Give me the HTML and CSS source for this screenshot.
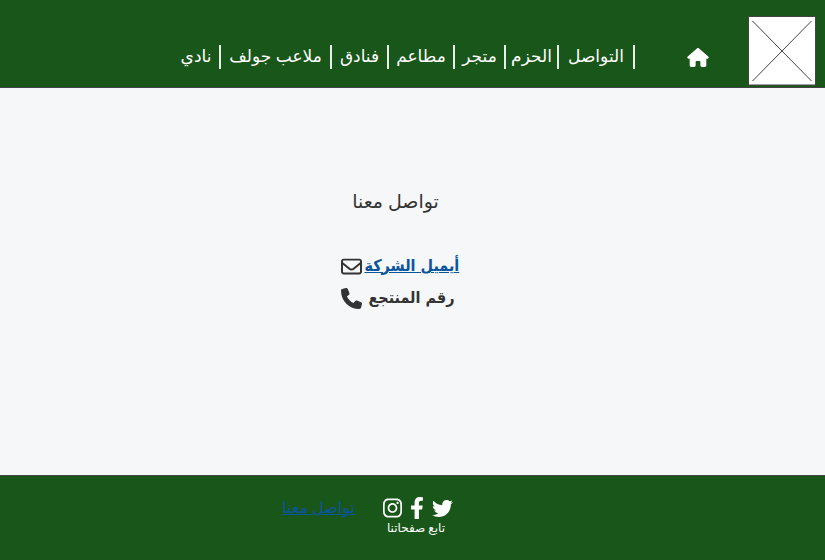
FILE: index.html
```html
<!DOCTYPE html>
<html lang="ar">
<head>
<meta charset="utf-8">
<meta name="viewport" content="width=device-width, initial-scale=1">
<title>تواصل معنا</title>
<link rel="stylesheet" href="styles.css">
</head>
<body>
<header class="site-header">
  <nav class="menu">
    <a class="menu-link w-32" href="#">نادي</a>
    <a class="menu-link w-95" href="#">ملاعب جولف</a>
    <a class="menu-link w-41" href="#">فنادق</a>
    <a class="menu-link w-50" href="#">مطاعم</a>
    <a class="menu-link w-35" href="#">متجر</a>
    <a class="menu-link w-37" href="#">الحزم</a>
    <a class="menu-link w-60" href="#">التواصل</a>
  </nav>
  <a class="home" href="#" aria-label="الرئيسية">
    <svg viewBox="0 0 576 512"><path d="M575.800 255.500c0 18-15 32.100-32 32.100h-32l.7 160.200c0 2.700-.2 5.400-.5 8.100V472c0 22.100-17.900 40-40 40H392c-22.100 0-40-17.900-40-40v-88c0-17.700-14.300-32-32-32h-64c-17.700 0-32 14.300-32 32v88c0 22.100-17.900 40-40 40h-80c-22.100 0-40-17.900-40-40V287.600H32c-18 0-32-14-32-32.100 0-9 3-17 10-24L266.400 8c7-7 15-8 22-8s15 2 21 7l255.400 224.500c8 7 12 15 11 24z"/></svg>
  </a>
  <svg class="logo" viewBox="0 0 68 70"><rect x="0.500" y="0.500" width="67" height="68.500"/><path d="M4.500 5L63.500 65M63.500 5L4.500 65"/></svg>
</header>
<main class="content">
  <h1 class="title" dir="rtl">تواصل معنا</h1>
  <div class="contact-row">
    <svg class="icon" viewBox="0 0 512 512"><path d="M64 112c-8.800 0-16 7.200-16 16v22.100l172.500 141.600c20.700 17 50.400 17 71.100 0L464 150.100V128c0-8.800-7.200-16-16-16H64zM48 212.200V384c0 8.800 7.200 16 16 16h384c8.800 0 16-7.200 16-16V212.200L322 328.800c-38.400 31.500-93.700 31.500-132 0L48 212.200zM0 128c0-35.300 28.700-64 64-64h384c35.300 0 64 28.700 64 64v256c0 35.300-28.700 64-64 64H64c-35.300 0-64-28.700-64-64V128z"/></svg>
    <a class="email" href="#" dir="rtl">أيميل الشركة</a>
  </div>
  <div class="contact-row">
    <svg class="icon" viewBox="0 0 512 512"><path d="M164.900 24.600c-7.700-18.600-28-28.500-47.400-23.200l-88 24C12.100 30.200 0 46 0 64c0 247.400 200.600 448 448 448 18 0 33.800-12.100 38.600-29.500l24-88c5.300-19.400-4.600-39.700-23.200-47.400l-96-40c-16.300-6.800-35.200-2.100-46.300 11.600L304.700 368C234.300 334.700 177.300 277.700 144 207.300l49.300-40.300c13.700-11.200 18.400-30 11.600-46.300l-40-96z"/></svg>
    <span class="phone" dir="rtl">رقم المنتجع</span>
  </div>
</main>
<footer class="site-footer">
  <a class="footer-link" href="#" dir="rtl">تواصل معنا</a>
  <div class="follow">
    <div class="social">
      <a href="#" aria-label="Instagram"><svg class="instagram" viewBox="0 0 448 512"><path d="M224.100 141c-63.600 0-114.900 51.300-114.900 114.900s51.300 114.900 114.900 114.900S339 319.500 339 255.900 287.700 141 224.100 141zm0 189.600c-41.100 0-74.700-33.500-74.700-74.700s33.500-74.700 74.700-74.700 74.700 33.500 74.700 74.700-33.600 74.700-74.700 74.700zm146.400-194.300c0 14.900-12 26.800-26.800 26.800-14.900 0-26.800-12-26.800-26.800s12-26.800 26.800-26.800 26.800 12 26.800 26.800zm76.100 27.200c-1.700-35.900-9.900-67.700-36.200-93.900-26.200-26.200-58-34.400-93.900-36.200-37-2.100-147.900-2.100-184.900 0-35.800 1.700-67.600 9.900-93.900 36.100s-34.400 58-36.200 93.900c-2.100 37-2.100 147.900 0 184.900 1.700 35.900 9.900 67.700 36.200 93.900s58 34.400 93.900 36.200c37 2.100 147.900 2.100 184.900 0 35.900-1.700 67.700-9.900 93.900-36.200 26.200-26.200 34.400-58 36.200-93.900 2.100-37 2.100-147.800 0-184.800zM398.800 388c-7.800 19.600-22.900 34.700-42.600 42.600-29.500 11.700-99.500 9-132.100 9s-102.700 2.600-132.100-9c-19.600-7.800-34.700-22.900-42.600-42.600-11.700-29.500-9-99.500-9-132.100s-2.600-102.700 9-132.100c7.800-19.600 22.900-34.700 42.600-42.600 29.500-11.700 99.500-9 132.100-9s102.700-2.600 132.100 9c19.600 7.800 34.700 22.900 42.600 42.600 11.700 29.500 9 99.500 9 132.100s2.700 102.700-9 132.100z"/></svg></a>
      <a href="#" aria-label="Facebook"><svg class="facebook" viewBox="0 0 320 512"><path d="M279.140 288l14.220-92.660h-88.910v-60.130c0-25.350 12.420-50.060 52.240-50.060h40.420V6.260S260.430 0 225.360 0c-73.220 0-121.080 44.380-121.080 124.720v70.620H22.890V288h81.390v224h100.170V288z"/></svg></a>
      <a href="#" aria-label="Twitter"><svg class="twitter" viewBox="0 0 512 512"><path d="M459.370 151.716c.325 4.548.325 9.097.325 13.645 0 138.720-105.583 298.558-298.558 298.558-59.452 0-114.680-17.219-161.137-47.106 8.447.974 16.568 1.299 25.340 1.299 49.055 0 94.213-16.568 130.274-44.832-46.132-.975-84.792-31.188-98.112-72.772 6.498.974 12.995 1.624 19.818 1.624 9.421 0 18.843-1.300 27.614-3.573-48.081-9.747-84.143-51.980-84.143-102.985v-1.299c13.969 7.797 30.214 12.670 47.431 13.319-28.264-18.843-46.781-51.005-46.781-87.391 0-19.492 5.197-37.360 14.294-52.954 51.655 63.675 129.300 105.258 216.365 109.807-1.624-7.797-2.599-15.918-2.599-24.040 0-57.828 46.782-104.934 104.934-104.934 30.213 0 57.502 12.670 76.670 33.137 23.715-4.548 46.456-13.320 66.599-25.340-7.798 24.366-24.366 44.833-46.132 57.827 21.117-2.273 41.584-8.122 60.426-16.243-14.292 20.791-32.161 39.308-52.628 54.253z"/></svg></a>
    </div>
    <p class="follow-text" dir="rtl">تابع صفحاتنا</p>
  </div>
</footer>
</body>
</html>
```
FILE: styles.css
```css
* { box-sizing: border-box; }
body {
  margin: 0;
  min-height: 100vh;
  display: flex;
  flex-direction: column;
  background: #f5f7f9;
  color: #333;
  font-family: "Open Sans", "Noto Sans", "DejaVu Sans", sans-serif;
  font-size: 17px;
  line-height: 24px;
}
svg { display: block; fill: currentColor; }
.site-header {
  display: flex;
  justify-content: flex-end;
  align-items: flex-start;
  padding: 16px 9px 1px;
  background: #195619;
  border-bottom: 1px solid #444;
  color: #fff;
}
.menu { display: flex; margin: 29px 52px 0 0; }
.menu-link {
  box-sizing: content-box;
  display: flex;
  justify-content: center;
  padding: 0 7px;
  border-right: 2px solid #e8eee8;
  color: #fff;
  line-height: 22px;
  padding-bottom: 2px;
  text-decoration: none;
  white-space: nowrap;
}
.w-32 { width: 32px; }
.w-95 { width: 95px; }
.w-41 { width: 41px; }
.w-50 { width: 50px; }
.w-35 { width: 35px; }
.w-37 { width: 37px; }
.w-60 { width: 60px; }
.home { margin: 32px 39px 0 0; color: #fff; }
.home svg { width: 22px; height: 19px; }
.logo { width: 68px; height: 70px; fill: #fff; stroke: #444; }
.content {
  flex: 1;
  display: flex;
  flex-direction: column;
  align-items: center;
  padding: 101px 30px 0 0;
}
.title { margin: 0 4px 37px 0; font-size: 19px; line-height: 24px; font-weight: 400; }
.contact-row {
  display: flex;
  align-items: center;
  gap: 3px;
  width: 114px;
  height: 32px;
  font-family: "DejaVu Sans Condensed", "DejaVu Sans", sans-serif;
  font-size: 16px;
  font-weight: 700;
  white-space: nowrap;
}
.icon { width: 21px; height: 21px; flex: none; }
.email { color: #0a559c; text-decoration-thickness: 1px; }
.phone { margin-left: 4px; }
.site-footer {
  display: flex;
  justify-content: center;
  gap: 28px;
  padding: 21px 90px 23px 0;
  background: #195619;
  border-top: 1px solid #444;
}
.footer-link {
  color: #0a559c;
  font-size: 16px;
  line-height: 20px;
  text-decoration-thickness: 1px;
}
.social { display: flex; align-items: center; gap: 8px; height: 22px; }
.social a { color: #fff; }
.instagram { width: 19px; height: 22px; }
.facebook { width: 14px; height: 22px; }
.twitter { width: 21px; height: 21px; }
.follow-text { margin: 0 4px 0 0; color: #fff; font-size: 12px; line-height: 18px; text-align: center; }
```
